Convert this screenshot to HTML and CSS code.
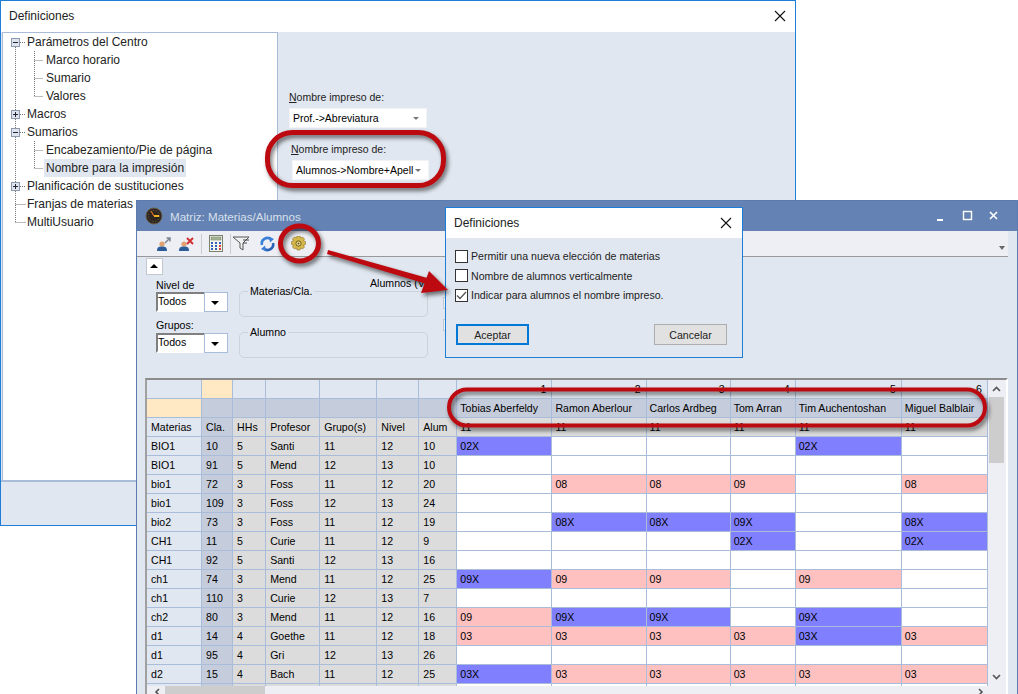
FILE: index.html
```html
<!DOCTYPE html>
<html lang="es">
<head>
  <meta charset="UTF-8">
  <title>Definiciones</title>
  <link rel="stylesheet" href="styles.css">
</head>
<body>

  <!-- Back window: Definiciones -->
  <div class="window win-back">
    <div class="dlg-title">
      <span>Definiciones</span>
      <svg class="close-x" width="14" height="14" viewBox="0 0 14 14"><path d="M2 2L12 12M12 2L2 12" stroke="#111" stroke-width="1.1" fill="none"/></svg>
    </div>
    <div class="back-body">
      <div class="tree">
        <svg class="tree-lines" width="40" height="200" viewBox="0 0 40 200">
          <g stroke="#777" stroke-width="1" stroke-dasharray="1 1" fill="none">
            <path d="M12.5 14V189.5M17 9.5H23M17 81.5H23M17 99.5H23M17 153.5H23M12.5 171.5H23M12.5 189.5H23"/>
            <path d="M31.5 18V63.5M31.5 27.5H41M31.5 45.5H41M31.5 63.5H41M31.5 108V135.5M31.5 117.5H41M31.5 135.5H41"/>
          </g>
          <g fill="#dfe5ef" stroke="#8d99ad">
            <rect x="8.5" y="5.5" width="8" height="8"/>
            <rect x="8.5" y="77.5" width="8" height="8"/>
            <rect x="8.5" y="95.5" width="8" height="8"/>
            <rect x="8.5" y="149.5" width="8" height="8"/>
          </g>
          <path d="M10 9.5H15M10 81.5H15M12.5 79V84M10 99.5H15M10 153.5H15M12.5 151V156" stroke="#223" fill="none"/>
        </svg>
        <div class="tree-row lvl0">Parámetros del Centro</div>
        <div class="tree-row lvl1">Marco horario</div>
        <div class="tree-row lvl1">Sumario</div>
        <div class="tree-row lvl1">Valores</div>
        <div class="tree-row lvl0">Macros</div>
        <div class="tree-row lvl0">Sumarios</div>
        <div class="tree-row lvl1">Encabezamiento/Pie de página</div>
        <div class="tree-row lvl1"><span class="selected">Nombre para la impresión</span></div>
        <div class="tree-row lvl0">Planificación de sustituciones</div>
        <div class="tree-row lvl0">Franjas de materias</div>
        <div class="tree-row lvl0">MultiUsuario</div>
      </div>
      <div class="back-pane">
        <label class="print-label"><u>N</u>ombre impreso de:</label>
        <div class="print-select">Prof.-&gt;Abreviatura<i class="mini-arrow"></i></div>
        <label class="print-label second"><u>N</u>ombre impreso de:</label>
        <div class="print-select second">Alumnos-&gt;Nombre+Apell<i class="mini-arrow"></i></div>
      </div>
    </div>
    <div class="back-foot"></div>
  </div>

  <!-- Matrix window -->
  <div class="window win-matrix">
    <div class="matrix-title">
      <svg width="18" height="18" viewBox="0 0 18 18">
        <circle cx="9" cy="9" r="8" fill="#2b2620" stroke="#6a5c48"/>
        <circle cx="9" cy="9" r="5.5" fill="none" stroke="#8a6a3a" stroke-dasharray="1 2"/>
        <path d="M9 9L14 9" stroke="#f0b020" stroke-width="2"/>
        <path d="M9 9L6 4" stroke="#e07020" stroke-width="1.2"/>
      </svg>
      <span class="matrix-name">Matriz: Materias/Alumnos</span>
      <div class="win-btns">
        <svg width="76" height="12" viewBox="0 0 76 12">
          <path d="M0 10H6" stroke="#fff" stroke-width="2"/>
          <rect x="26.5" y="1.5" width="8" height="8" fill="none" stroke="#fff" stroke-width="1.4"/>
          <path d="M53 2L60 9M60 2L53 9" stroke="#fff" stroke-width="1.6"/>
        </svg>
      </div>
    </div>
    <div class="toolbar">
      <svg class="tool" width="15" height="16" viewBox="0 0 15 16">
        <circle cx="5" cy="8" r="2.6" fill="#e0a070"/><path d="M0 15c0-4 2-4.500 5-4.500s5 .5 5 4.500z" fill="#2c5c98"/>
        <path d="M8 7L13 2M9.500 2H13V5.500" stroke="#7b8794" stroke-width="1.500" fill="none"/>
      </svg>
      <svg class="tool" width="15" height="16" viewBox="0 0 15 16">
        <circle cx="5" cy="8" r="2.6" fill="#e0a070"/><path d="M0 15c0-4 2-4.500 5-4.500s5 .5 5 4.500z" fill="#2c5c98"/>
        <path d="M8 2L14 8M14 2L8 8" stroke="#d03030" stroke-width="2" fill="none"/>
      </svg>
      <i class="tool-sep"></i>
      <svg class="tool" width="14" height="17" viewBox="0 0 14 17">
        <rect x=".5" y=".5" width="13" height="16" fill="#f4f4ea" stroke="#7a8270"/>
        <rect x="2" y="2" width="10" height="3" fill="#a8b898" stroke="#6a7a60" stroke-width=".5"/>
        <path d="M2 7h2v2H2zM6 7h2v2H6zM10 7h2v2h-2zM2 10h2v2H2zM6 10h2v2H6z" fill="#3060c0"/>
        <path d="M10 10h2v2h-2zM10 13h2v2h-2z" fill="#d04040"/>
        <path d="M2 13h2v2H2zM6 13h2v2H6z" fill="#3060c0"/>
      </svg>
      <i class="tool-sep tight"></i>
      <svg class="tool funnel" width="18" height="15" viewBox="0 0 18 15">
        <path d="M1 1H17L11 7V14L8 12V7Z" fill="#f0f0f0" stroke="#555"/>
        <path d="M11 4H17M11 7H15" stroke="#444"/>
      </svg>
      <svg class="tool refresh" width="15" height="16" viewBox="0 0 15 16">
        <path d="M2 9A5.500 5.500 0 0 1 11 3.500" fill="none" stroke="#3a80d8" stroke-width="2.600"/>
        <path d="M13 7A5.500 5.500 0 0 1 4 12.500" fill="none" stroke="#2a62b8" stroke-width="2.600"/>
        <path d="M9 .5L14 3L10 6.500ZM6 15.500L1 13L5 9.500Z" fill="#3a80d8"/>
      </svg>
      <svg class="tool" width="15" height="15" viewBox="0 0 15 15">
        <path d="M6 0h3l.5 2 2-1 2 2-1 2 2 .5v3l-2 .5 1 2-2 2-2-1-.5 2H6l-.5-2-2 1-2-2 1-2-2-.5v-3l2-.5-1-2 2-2 2 1z" fill="#d6b848" stroke="#8a7428" stroke-width=".6"/>
        <circle cx="7.500" cy="7.500" r="2.600" fill="#f2e6a0" stroke="#6a5818"/>
        <circle cx="7.500" cy="7.500" r="1" fill="#6a5818"/>
      </svg>
      <i class="tool-more"></i>
    </div>
    <div class="panel">
      <button class="collapse"><i></i></button>
      <div class="filters">
        <div class="filter-col">
          <label>Nivel de</label>
          <div class="combo">Todos<span class="combo-btn"><i></i></span></div>
          <label class="lower">Grupos:</label>
          <div class="combo">Todos<span class="combo-btn"><i></i></span></div>
        </div>
        <div class="group-col">
          <fieldset><legend>Materias/Cla.</legend></fieldset>
          <fieldset><legend>Alumno</legend></fieldset>
          <span class="alum-label">Alumnos (V</span>
        </div>
        <div class="stub-col"><i></i><i></i></div>
      </div>
    </div>
    <div class="grid-area">
      <div class="grid-top">
        <div class="grid-clip">
          <table class="grid">
            <colgroup>
              <col class="w-mat"><col class="w-cla"><col class="w-hhs"><col class="w-prof"><col class="w-grp"><col class="w-niv"><col class="w-alum">
              <col class="w-s1"><col class="w-s2"><col class="w-s3"><col class="w-s4"><col class="w-s5"><col class="w-s6">
            </colgroup>
            <tr class="head1"><td></td><td class="orange"></td><td></td><td></td><td></td><td></td><td></td>
              <td class="num">1</td><td class="num">2</td><td class="num">3</td><td class="num">4</td><td class="num">5</td><td class="num">6</td></tr>
            <tr class="head2"><td class="orange"></td><td></td><td></td><td></td><td></td><td></td><td></td>
              <td>Tobias Aberfeldy</td><td>Ramon Aberlour</td><td>Carlos Ardbeg</td><td>Tom Arran</td><td>Tim Auchentoshan</td><td>Miguel Balblair</td></tr>
            <tr class="head3"><td class="sub">Materias</td><td class="cla">Cla.</td><td>HHs</td><td>Profesor</td><td>Grupo(s)</td><td>Nivel</td><td>Alum</td>
              <td>11</td><td>11</td><td>11</td><td>11</td><td>11</td><td>11</td></tr>
            <tr><th class="sub">BIO1</th><th class="cla">10</th><th>5</th><th>Santi</th><th>11</th><th>12</th><th>10</th>
              <td class="blue">02X</td><td></td><td></td><td></td><td class="blue">02X</td><td></td></tr>
            <tr><th class="sub">BIO1</th><th class="cla">91</th><th>5</th><th>Mend</th><th>12</th><th>13</th><th>10</th>
              <td></td><td></td><td></td><td></td><td></td><td></td></tr>
            <tr><th class="sub">bio1</th><th class="cla">72</th><th>3</th><th>Foss</th><th>11</th><th>12</th><th>20</th>
              <td></td><td class="pink">08</td><td class="pink">08</td><td class="pink">09</td><td></td><td class="pink">08</td></tr>
            <tr><th class="sub">bio1</th><th class="cla">109</th><th>3</th><th>Foss</th><th>12</th><th>13</th><th>24</th>
              <td></td><td></td><td></td><td></td><td></td><td></td></tr>
            <tr><th class="sub">bio2</th><th class="cla">73</th><th>3</th><th>Foss</th><th>11</th><th>12</th><th>19</th>
              <td></td><td class="blue">08X</td><td class="blue">08X</td><td class="blue">09X</td><td></td><td class="blue">08X</td></tr>
            <tr><th class="sub">CH1</th><th class="cla">11</th><th>5</th><th>Curie</th><th>11</th><th>12</th><th>9</th>
              <td></td><td></td><td></td><td class="blue">02X</td><td></td><td class="blue">02X</td></tr>
            <tr><th class="sub">CH1</th><th class="cla">92</th><th>5</th><th>Santi</th><th>12</th><th>13</th><th>16</th>
              <td></td><td></td><td></td><td></td><td></td><td></td></tr>
            <tr><th class="sub">ch1</th><th class="cla">74</th><th>3</th><th>Mend</th><th>11</th><th>12</th><th>25</th>
              <td class="blue">09X</td><td class="pink">09</td><td class="pink">09</td><td></td><td class="pink">09</td><td></td></tr>
            <tr><th class="sub">ch1</th><th class="cla">110</th><th>3</th><th>Curie</th><th>12</th><th>13</th><th>7</th>
              <td></td><td></td><td></td><td></td><td></td><td></td></tr>
            <tr><th class="sub">ch2</th><th class="cla">80</th><th>3</th><th>Mend</th><th>11</th><th>12</th><th>16</th>
              <td class="pink">09</td><td class="blue">09X</td><td class="blue">09X</td><td></td><td class="blue">09X</td><td></td></tr>
            <tr><th class="sub">d1</th><th class="cla">14</th><th>4</th><th>Goethe</th><th>11</th><th>12</th><th>18</th>
              <td class="pink">03</td><td class="pink">03</td><td class="pink">03</td><td class="pink">03</td><td class="blue">03X</td><td class="pink">03</td></tr>
            <tr><th class="sub">d1</th><th class="cla">95</th><th>4</th><th>Gri</th><th>12</th><th>13</th><th>26</th>
              <td></td><td></td><td></td><td></td><td></td><td></td></tr>
            <tr><th class="sub">d2</th><th class="cla">15</th><th>4</th><th>Bach</th><th>11</th><th>12</th><th>25</th>
              <td class="blue">03X</td><td class="pink">03</td><td class="pink">03</td><td class="pink">03</td><td class="pink">03</td><td class="pink">03</td></tr>
            <tr><th class="sub"></th><th class="cla"></th><th></th><th></th><th></th><th></th><th></th>
              <td></td><td></td><td></td><td></td><td></td><td></td></tr>
          </table>
        </div>
        <div class="vscroll">
          <svg width="17" height="10" viewBox="0 0 17 10"><path d="M5 7L8.500 3.500L12 7" stroke="#555" stroke-width="1.600" fill="none"/></svg>
          <div class="vthumb"></div>
          <svg class="vdown" width="17" height="10" viewBox="0 0 17 10"><path d="M5 3L8.500 6.500L12 3" stroke="#555" stroke-width="1.600" fill="none"/></svg>
        </div>
      </div>
      <div class="hscroll">
        <svg width="18" height="8" viewBox="0 0 18 8"><path d="M12 3L9 6L12 9" stroke="#555" stroke-width="1.600" fill="none"/></svg>
        <div class="hthumb"></div>
        <svg class="hright" width="18" height="8" viewBox="0 0 18 8"><path d="M6 3L9 6L6 9" stroke="#555" stroke-width="1.600" fill="none"/></svg>
      </div>
    </div>
  </div>

  <!-- Front dialog -->
  <div class="window win-dialog">
    <div class="dlg-title">
      <span>Definiciones</span>
      <svg class="close-x" width="14" height="14" viewBox="0 0 14 14"><path d="M2 2L12 12M12 2L2 12" stroke="#111" stroke-width="1.1" fill="none"/></svg>
    </div>
    <div class="dlg-body">
      <div class="check-row"><i class="check"></i>Permitir una nueva elección de materias</div>
      <div class="check-row"><i class="check"></i>Nombre de alumnos verticalmente</div>
      <div class="check-row"><i class="check">
        <svg width="11" height="11" viewBox="0 0 11 11"><path d="M1 5.500L4 8.500L10 2" stroke="#555" stroke-width="1.300" fill="none"/></svg>
      </i>Indicar para alumnos el nombre impreso.</div>
      <div class="dlg-btns">
        <button class="btn btn-ok">Aceptar</button>
        <button class="btn">Cancelar</button>
      </div>
    </div>
  </div>

  <!-- Red annotations on top of the windows -->
  <svg class="notes" width="1018" height="694" viewBox="0 0 1018 694">
    <g fill="none" stroke="#bd0a10">
      <rect x="267.500" y="132.500" width="176" height="53" rx="25" stroke-width="5"/>
      <ellipse cx="299.500" cy="243.500" rx="19" ry="17.500" stroke-width="5"/>
      <rect x="449" y="389.500" width="536" height="36" rx="18" stroke-width="4"/>
    </g>
    <path d="M328 250L431 279L430 285L327 254Z" fill="#bd0a10"/>
    <path d="M429 271L421 293L448 290Z" fill="#bd0a10"/>
  </svg>

</body>
</html>
```

FILE: styles.css
```css
body {
  margin: 0;
  width: 1018px;
  height: 694px;
  overflow: hidden;
  position: relative;
  background-color: #fff;
  font-family: "Liberation Sans", Arial, sans-serif;
  font-size: 10.600px;
  color: #000;
}
i {
  font-style: normal;
}

/* windows sit on a free desktop */
.window {
  position: absolute;
  box-sizing: border-box;
  display: flex;
  flex-direction: column;
}
.win-back {
  left: 0;
  top: 0;
  width: 796px;
  height: 526px;
  border: 1px solid #1c7ed6;
  background-color: #e1e7f0;
}
.win-matrix {
  left: 136px;
  top: 200px;
  width: 882px;
  height: 494px;
  border: 1px solid #5a7cb0;
  border-bottom: none;
  background-color: #e1e7f0;
}
.win-dialog {
  left: 445px;
  top: 207px;
  width: 298px;
  height: 151px;
  border: 1px solid #1c7ed6;
  background-color: #e1e7f0;
}

.dlg-title {
  height: 30px;
  box-sizing: border-box;
  background-color: #fff;
  display: flex;
  align-items: center;
  justify-content: space-between;
  padding: 0 8px;
  font-size: 12px;
  color: #222;
  flex-shrink: 0;
}
.win-back .dlg-title {
  height: 31px;
  padding-bottom: 1px;
}
.win-back .close-x {
  margin-right: 0;
}
.close-x {
  margin-right: 1px;
}

/* back window */
.back-body {
  display: flex;
  height: 450px;
  border-bottom: 2px solid #a9bcd9;
  box-sizing: border-box;
}
.tree {
  position: relative;
  width: 276px;
  margin-left: 1px;
  box-sizing: border-box;
  border: 1px solid #a9bcd9;
  border-bottom: none;
  background-color: #fff;
  font-size: 12px;
}
.tree-lines {
  position: absolute;
  left: 0;
  top: 0;
}
.tree-row {
  height: 18px;
  line-height: 18px;
  white-space: nowrap;
  color: #222;
}
.lvl0 {
  padding-left: 24px;
}
.lvl1 {
  padding-left: 43px;
}
.lvl1 .selected {
  display: inline-block;
  background-color: #e1e7f0;
  margin-left: -2px;
  padding: 0 2px;
}
.back-pane {
  padding: 58px 0 0 11px;
  font-size: 10.500px;
}
.print-label {
  display: block;
  height: 14px;
  line-height: 14px;
  margin-bottom: 4px;
  color: #222;
}
.print-label.second {
  margin: 14px 0 4px 2px;
}
.print-select {
  position: relative;
  box-sizing: border-box;
  width: 138px;
  height: 20px;
  line-height: 18px;
  padding-left: 3px;
  background-color: #fff;
  border: 1px solid #f1f3f7;
  white-space: nowrap;
  overflow: hidden;
}
.print-select.second {
  margin-left: 3px;
  width: 137px;
}
.mini-arrow {
  position: absolute;
  right: 7px;
  top: 8px;
  border-left: 3px solid transparent;
  border-right: 3px solid transparent;
  border-top: 3px solid #777;
}
.back-foot {
  flex: 1;
}

/* matrix window */
.matrix-title {
  height: 30px;
  flex-shrink: 0;
  background-color: #6482b3;
  display: flex;
  align-items: center;
  padding-left: 8px;
}
.matrix-name {
  margin-left: 7px;
  font-size: 11.600px;
  color: #d8e0ec;
}
.win-btns {
  margin-left: auto;
  margin-right: 4px;
  height: 12px;
}
.toolbar {
  height: 25px;
  width: 871px;
  flex-shrink: 0;
  box-sizing: border-box;
  background-color: #eeeff4;
  display: flex;
  align-items: center;
  padding-left: 20px;
  position: relative;
}
.tool {
  margin-right: 7px;
}
.tool-sep {
  width: 1px;
  height: 20px;
  background-color: #c8ccd4;
  margin-right: 7px;
}
.tool-sep.tight {
  margin-right: 1px;
}
.tool.funnel {
  margin-right: 10px;
}
.tool.refresh {
  margin-right: 16px;
}
.tool-more {
  position: absolute;
  right: 3px;
  top: 15px;
  border-left: 3px solid transparent;
  border-right: 3px solid transparent;
  border-top: 4px solid #666;
}
.panel {
  height: 122px;
  flex-shrink: 0;
  width: 871px;
  box-sizing: border-box;
  border-top: 1px solid #999;
  padding: 1px 0 0 9px;
  overflow: hidden;
}
.collapse {
  display: block;
  box-sizing: border-box;
  width: 17px;
  height: 17px;
  padding: 0;
  border: 1px solid #c4c8d0;
  background-color: #fff;
  position: relative;
}
.collapse i {
  position: absolute;
  left: 3px;
  top: 5px;
  border-left: 4px solid transparent;
  border-right: 4px solid transparent;
  border-bottom: 4px solid #000;
}
.filters {
  display: flex;
  margin-top: 3px;
  margin-left: 10px;
}
.filter-col {
  width: 83px;
}
.filter-col label {
  display: block;
  height: 14px;
  line-height: 14px;
}
.filter-col label.lower {
  margin-top: 6px;
  margin-bottom: 1px;
}
.combo {
  position: relative;
  box-sizing: border-box;
  width: 72px;
  height: 20px;
  line-height: 14px;
  padding-left: 0;
  background-color: #fff;
  border: 2px solid #808080;
  border-right-color: #fff;
  border-bottom-color: #fff;
}
.combo-btn {
  position: absolute;
  right: -2px;
  top: -2px;
  bottom: -2px;
  width: 24px;
  box-sizing: border-box;
  background-color: #fff;
  border: 1px solid #a9bcd9;
}
.combo-btn i {
  position: absolute;
  left: 6px;
  top: 8px;
  border-left: 4px solid transparent;
  border-right: 4px solid transparent;
  border-top: 4px solid #000;
}
.group-col {
  position: relative;
  width: 189px;
  padding-top: 6px;
  display: flex;
  flex-direction: column;
  gap: 8px;
}
.group-col fieldset {
  box-sizing: border-box;
  margin: 0;
  padding: 0;
  height: 33px;
  border: 1px solid #ccd1da;
  border-radius: 5px;
}
.group-col legend {
  margin-left: 8px;
  padding: 0 2px;
  line-height: 14px;
}
.alum-label {
  position: absolute;
  left: 131px;
  top: -2px;
  white-space: nowrap;
  line-height: 14px;
}
.stub-col {
  margin-left: 15px;
  display: flex;
  flex-direction: column;
  gap: 10px;
  padding-top: 19px;
}
.stub-col i {
  display: block;
  width: 12px;
  height: 10px;
  border: 1px solid #c4c8d0;
  background-color: #eef0f4;
}

/* grid */
.grid-area {
  margin-left: 8px;
  width: 863px;
  flex: 1;
  min-height: 0;
  box-sizing: border-box;
  border-top: 2px solid #8c8c8c;
  border-left: 2px solid #a0a0a0;
  border-right: 2px solid #fff;
  display: flex;
  flex-direction: column;
  background-color: #eeeff4;
}
.grid-top {
  display: flex;
  height: 306px;
}
.grid-clip {
  width: 841px;
  height: 306px;
  overflow: hidden;
}
.grid {
  table-layout: fixed;
  width: 841px;
  border-collapse: separate;
  border-spacing: 0;
}
.w-mat { width: 55px; }
.w-cla { width: 31px; }
.w-hhs { width: 33px; }
.w-prof { width: 54px; }
.w-grp { width: 57px; }
.w-niv { width: 42px; }
.w-alum { width: 38px; }
.w-s1 { width: 95px; }
.w-s2 { width: 94px; }
.w-s3 { width: 84px; }
.w-s4 { width: 65px; }
.w-s5 { width: 106px; }
.w-s6 { width: 86px; }
.grid td, .grid th {
  box-sizing: border-box;
  height: 19px;
  padding: 0 0 0 4px;
  border-right: 1px solid #a9bcd9;
  border-bottom: 1px solid #a9bcd9;
  font-size: 10.600px;
  font-weight: normal;
  text-align: left;
  white-space: nowrap;
  overflow: hidden;
  background-color: #fff;
}
.grid td:nth-child(n+8) {
  padding-left: 3px;
}
.grid th {
  background-color: #dcdcdc;
}
.grid .head1 td {
  background-color: #e1e7f0;
}
.grid .head2 td {
  background-color: #c5ccdb;
}
.grid .head3 td {
  background-color: #dcdcdc;
}
.grid tr td.orange {
  background-color: #ffe8c4;
}
.grid .head1 .num {
  text-align: right;
  padding-right: 5px;
}
.grid tr .sub {
  background-color: #e1e7f0;
}
.grid tr .cla {
  background-color: #c5ccdb;
}
.grid .blue {
  background-color: #8080ff;
}
.grid .pink {
  background-color: #ffc0c0;
}
.vscroll {
  width: 18px;
  position: relative;
  background-color: #eeeff4;
}
.vscroll svg {
  display: block;
  margin-top: 4px;
}
.vthumb {
  width: 15px;
  height: 66px;
  margin: 3px 0 0 1px;
  background-color: #cdcdcd;
}
.vscroll .vdown {
  position: absolute;
  left: 0;
  top: 292px;
  margin: 0;
}
.hscroll {
  display: flex;
  flex: 1;
  position: relative;
  overflow: hidden;
}
.hthumb {
  width: 100px;
  height: 8px;
  background-color: #cdcdcd;
}
.hscroll .hright {
  position: absolute;
  right: 15px;
  top: 0;
}

/* dialog */
.dlg-body {
  padding: 11px 0 0 9px;
}
.check-row {
  display: flex;
  align-items: center;
  height: 14px;
  margin-bottom: 5.500px;
  white-space: nowrap;
  color: #222;
}
.check {
  box-sizing: border-box;
  width: 13px;
  height: 13px;
  margin-right: 3px;
  border: 1px solid #333;
  background-color: #fff;
  display: flex;
  align-items: center;
  justify-content: center;
}
.dlg-btns {
  display: flex;
  justify-content: space-between;
  width: 271px;
  margin: 22px 0 0 1px;
}
.btn {
  box-sizing: border-box;
  width: 73px;
  height: 21px;
  padding: 0;
  border: 1px solid #adadad;
  background-color: #e1e1e1;
  font-family: "Liberation Sans", Arial, sans-serif;
  font-size: 10.600px;
  color: #222;
}
.btn-ok {
  border: 2px solid #0078d7;
}

/* annotations */
.notes {
  position: absolute;
  left: 0;
  top: 0;
  filter: drop-shadow(2px 3px 2px rgba(0, 0, 0, 0.55));
}
```
